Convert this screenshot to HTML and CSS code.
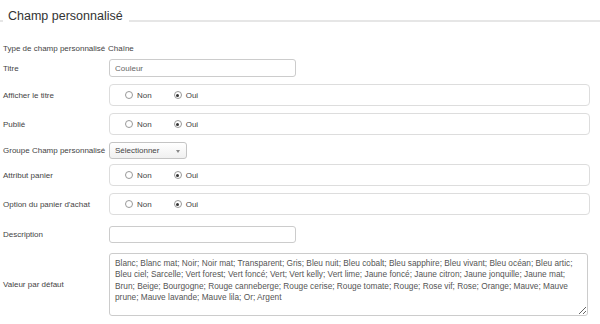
FILE: index.html
```html
<!DOCTYPE html>
<html lang="fr">
<head>
    <meta charset="UTF-8">
    <title>Champ personnalisé</title>
    <link rel="stylesheet" href="styles.css">
</head>
<body>
    <div class="section-title">
        <span class="title-text">Champ personnalisé</span>
    </div>

    <div class="form">
        <div class="row row-text">
            <div class="label">Type de champ personnalisé</div>
            <div class="value">Chaîne</div>
        </div>

        <div class="row row-first">
            <div class="label">Titre</div>
            <input type="text" class="input" value="Couleur">
        </div>

        <div class="row">
            <div class="label">Afficher le titre</div>
            <div class="radio-box">
                <label class="radio"><span class="dot"></span>Non</label>
                <label class="radio"><span class="dot checked"></span>Oui</label>
            </div>
        </div>

        <div class="row">
            <div class="label">Publié</div>
            <div class="radio-box">
                <label class="radio"><span class="dot"></span>Non</label>
                <label class="radio"><span class="dot checked"></span>Oui</label>
            </div>
        </div>

        <div class="row">
            <div class="label">Groupe Champ personnalisé</div>
            <div class="select">Sélectionner</div>
        </div>

        <div class="row row-tight">
            <div class="label">Attribut panier</div>
            <div class="radio-box">
                <label class="radio"><span class="dot"></span>Non</label>
                <label class="radio"><span class="dot checked"></span>Oui</label>
            </div>
        </div>

        <div class="row">
            <div class="label">Option du panier d'achat</div>
            <div class="radio-box">
                <label class="radio"><span class="dot"></span>Non</label>
                <label class="radio"><span class="dot checked"></span>Oui</label>
            </div>
        </div>

        <div class="row row-wide">
            <div class="label">Description</div>
            <input type="text" class="input input-short">
        </div>

        <div class="row row-area">
            <div class="label">Valeur par défaut</div>
            <textarea class="textarea">Blanc; Blanc mat; Noir; Noir mat; Transparent; Gris; Bleu nuit; Bleu cobalt; Bleu sapphire; Bleu vivant; Bleu océan; Bleu artic;
Bleu ciel; Sarcelle; Vert forest; Vert foncé; Vert; Vert kelly; Vert lime; Jaune foncé; Jaune citron; Jaune jonquille; Jaune mat;
Brun; Beige; Bourgogne; Rouge canneberge; Rouge cerise; Rouge tomate; Rouge; Rose vif; Rose; Orange; Mauve; Mauve
prune; Mauve lavande; Mauve lila; Or; Argent</textarea>
        </div>
    </div>
</body>
</html>
```

FILE: styles.css
```css
* {
    margin: 0;
    padding: 0;
    box-sizing: border-box;
}

body {
    width: 600px;
    background: #fff;
    color: #444;
    font-family: 'Liberation Sans', Arial, sans-serif;
    font-size: 8px;
}

.section-title {
    display: flex;
    align-items: flex-end;
    height: 24px;
    padding-top: 7px;
}

.section-title::before {
    content: '';
    width: 3px;
    margin-right: 5px;
    border-bottom: 2px solid #e6e6e6;
    margin-bottom: 2px;
}

.section-title::after {
    content: '';
    flex: 1;
    margin-left: 6px;
    border-bottom: 2px solid #e6e6e6;
    margin-bottom: 2px;
}

.title-text {
    font-size: 12.5px;
    color: #333;
    line-height: 15px;
}

.form {
    padding-top: 17px;
}

.row {
    display: flex;
    align-items: center;
    margin-top: 7px;
}

.row-text {
    margin-top: 0;
    height: 14px;
}

.row-first {
    margin-top: 4px;
}

.row-tight {
    margin-top: 5px;
}

.row-wide {
    margin-top: 11px;
}

.row-area {
    margin-top: 10px;
}

.label {
    flex: none;
    width: 109px;
    padding-left: 3px;
    color: #444;
    white-space: nowrap;
}

.value {
    margin-left: -1px;
    color: #444;
}

.input {
    width: 187px;
    height: 18px;
    padding: 0 5px;
    border: 1px solid #ccc;
    border-radius: 3px;
    background: #fff;
    color: #666;
    font-family: 'Liberation Sans', Arial, sans-serif;
    font-size: 8px;
    outline: none;
}

.input-short {
    height: 17px;
}

.radio-box {
    width: 481px;
    height: 22px;
    display: flex;
    align-items: center;
    padding-left: 15px;
    border: 1px solid #ddd;
    border-radius: 4px;
}

.radio {
    display: flex;
    align-items: center;
    margin-right: 22px;
    color: #444;
}

.dot {
    width: 8px;
    height: 8px;
    margin-right: 4px;
    border: 1px solid #999;
    border-radius: 50%;
    background: #fff;
    position: relative;
}

.dot.checked::after {
    content: '';
    position: absolute;
    left: 1.5px;
    top: 1.5px;
    width: 3px;
    height: 3px;
    border-radius: 50%;
    background: #333;
}

.select {
    width: 78px;
    height: 17px;
    line-height: 15px;
    padding-left: 5px;
    border: 1px solid #c4c4c4;
    border-radius: 3px;
    background: linear-gradient(#ffffff, #f0f0f0);
    color: #444;
    position: relative;
}

.select::after {
    content: '';
    position: absolute;
    right: 6px;
    top: 7px;
    border-left: 2.5px solid transparent;
    border-right: 2.5px solid transparent;
    border-top: 3px solid #888;
}

.textarea {
    width: 479px;
    height: 63px;
    padding: 4px 5px;
    border: 1px solid #ccc;
    border-radius: 3px;
    color: #555;
    font-family: 'Liberation Sans', Arial, sans-serif;
    font-size: 8.3px;
    line-height: 11.3px;
    resize: vertical;
    overflow: hidden;
    outline: none;
}
```
